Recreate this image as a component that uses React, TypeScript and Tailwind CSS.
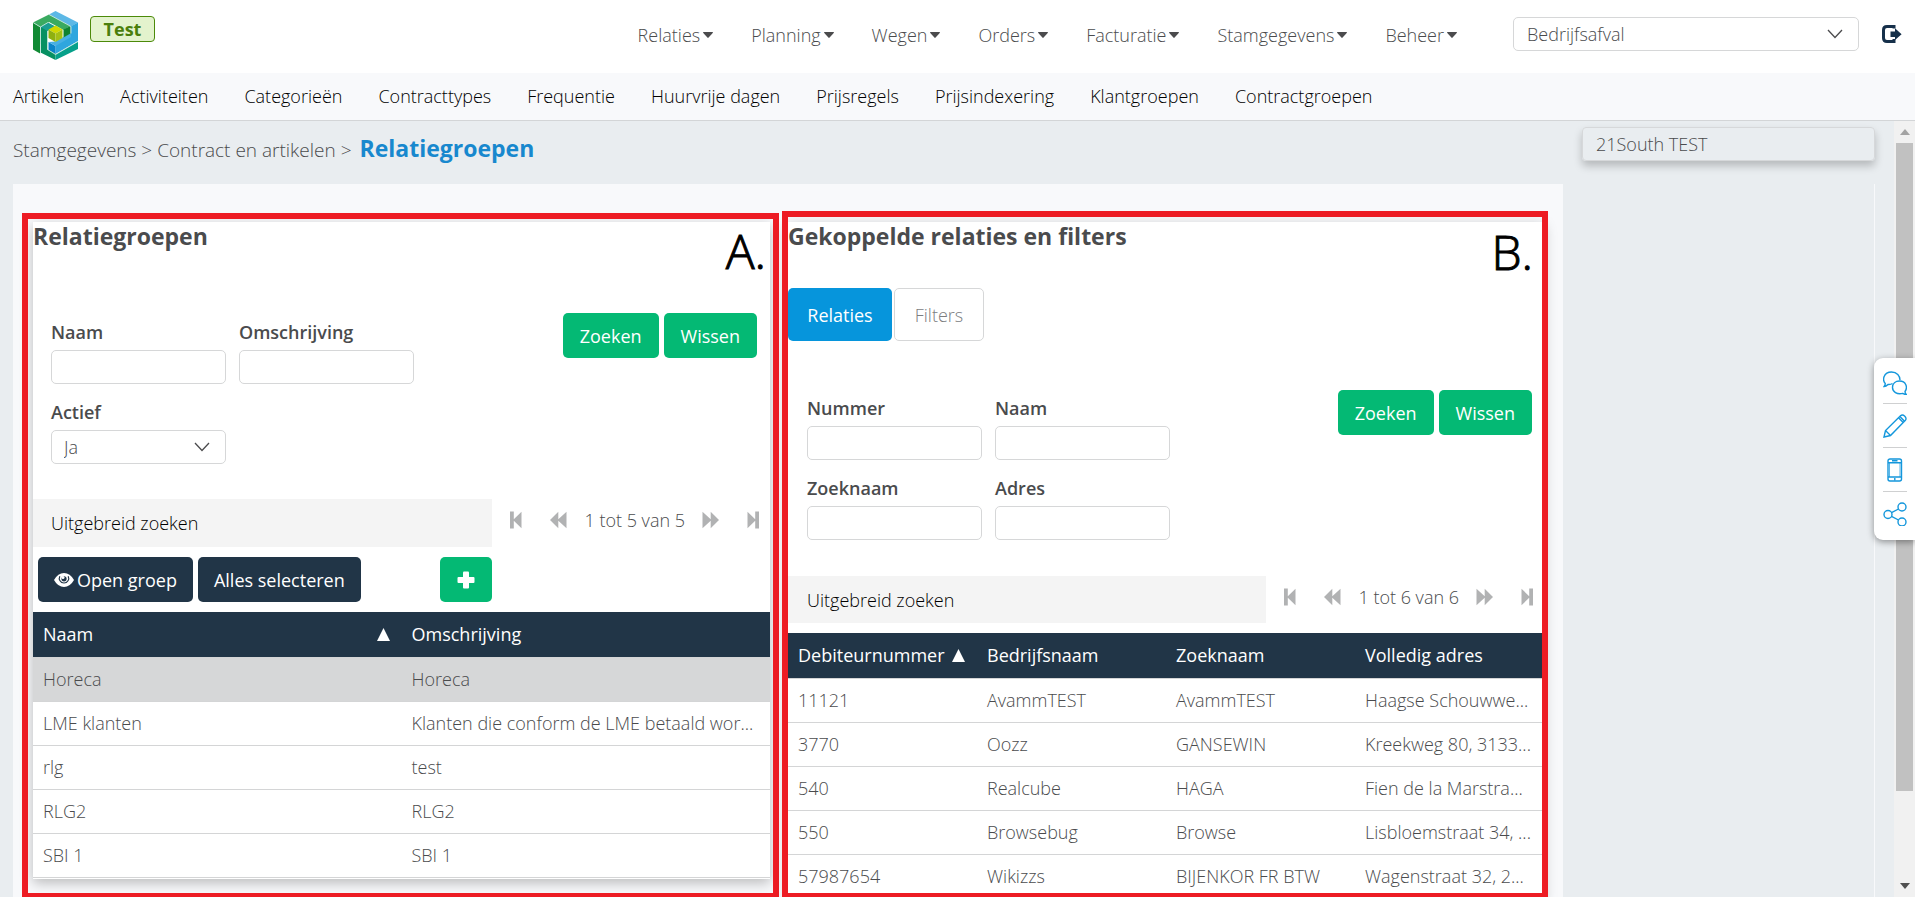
import React, { useId } from 'react';

const mainMenu = ['Relaties', 'Planning', 'Wegen', 'Orders', 'Facturatie', 'Stamgegevens', 'Beheer'];

const subMenu = [
  'Artikelen',
  'Activiteiten',
  'Categorieën',
  'Contracttypes',
  'Frequentie',
  'Huurvrije dagen',
  'Prijsregels',
  'Prijsindexering',
  'Klantgroepen',
  'Contractgroepen',
];

const groups = [
  ['Horeca', 'Horeca'],
  ['LME klanten', 'Klanten die conform de LME betaald wor...'],
  ['rlg', 'test'],
  ['RLG2', 'RLG2'],
  ['SBI 1', 'SBI 1'],
];

const relations = [
  ['11121', 'AvammTEST', 'AvammTEST', 'Haagse Schouwwe...'],
  ['3770', 'Oozz', 'GANSEWIN', 'Kreekweg 80, 3133...'],
  ['540', 'Realcube', 'HAGA', 'Fien de la Marstra...'],
  ['550', 'Browsebug', 'Browse', 'Lisbloemstraat 34, ...'],
  ['57987654', 'Wikizzs', 'BIJENKOR FR BTW', 'Wagenstraat 32, 2...'],
];

function Logo() {
  return (
    <svg viewBox="0 0 45 49" className="h-[49px] w-[45px]" aria-hidden="true">
      <path d="M22.5 0 45 11.5 38 15.5 16 3.5Z" fill="#5cb8e6" />
      <path d="M45 11.5V30L22.5 43V31L37.5 22.5V15.5Z" fill="#2fa6de" />
      <path d="M15.5 31 22.5 35V43L15.5 39Z" fill="#0a84c8" />
      <path d="M22.5 30.5 37.5 22 38 26 22.5 35 15.5 31Z" fill="#48b0e4" />
      <path d="M0 11.5 16 3.5 37.5 15 30.5 19 16 11 7 16Z" fill="#3aaa60" />
      <path d="M0 11.5 7 16V42.5L0 38.5Z" fill="#118a34" />
      <path d="M30.5 18.5 37.5 15V22.5L30.5 26.5Z" fill="#0f8230" />
      <path d="M7.500 15.500 15 11.500 22.500 15.500 14.500 20V37L7.500 33Z" fill="#1a9e92" />
      <path d="M7.500 16 14.500 20V38.500L22.500 43V49L7.500 41.500Z" fill="#079062" />
      <path d="M22.500 43.500 45 30.500V38L22.500 49Z" fill="#06a08a" />
      <path d="M0 11.500 7.500 16V42.500M16 3.500 38 15.500V22.500M22.500 43.500 45 30.500M7.500 16 15 11.500M14.500 20V38.500L22.500 43.500" fill="none" stroke="#d4eee6" strokeWidth="0.8" />
      <path d="M15.500 18.500 22.500 14.500 29.500 18.500 22.500 22.500Z" fill="#d0d800" />
      <path d="M15.500 18.500 22.500 22.500V31L15.500 27Z" fill="#8fb010" />
      <path d="M29.500 18.500 22.500 22.500V31L29.500 27Z" fill="#a5c015" />
    </svg>
  );
}

function Chevron() {
  return (
    <svg
      viewBox="0 0 16 10"
      className="pointer-events-none absolute right-4 top-3 h-[10px] w-4"
      fill="none"
      stroke="#4b4b4d"
      strokeWidth="1.3"
      aria-hidden="true"
    >
      <path d="M1 1 8 8.500 15 1" />
    </svg>
  );
}

function TextField({ label }: { label: string }) {
  const id = useId();
  return (
    <div className="flex w-[175px] flex-col">
      <label htmlFor={id} className="text-lg leading-6 font-semibold">
        {label}
      </label>
      <input id={id} type="text" className="mt-[6px] h-[34px] rounded-[5px] border border-[#d6d7d8] bg-white px-3" />
    </div>
  );
}

function SelectField({ label, value }: { label: string; value: string }) {
  const id = useId();
  return (
    <div className="flex w-[175px] flex-col">
      <label htmlFor={id} className="text-lg leading-6 font-semibold">
        {label}
      </label>
      <div className="relative mt-[6px] h-[34px]">
        <select id={id} className="h-full w-full appearance-none rounded-[5px] border border-[#d6d7d8] bg-white px-3">
          <option>{value}</option>
        </select>
        <Chevron />
      </div>
    </div>
  );
}

function SearchButtons() {
  return (
    <div className="flex gap-[5px]">
      {['Zoeken', 'Wissen'].map((label) => (
        <button key={label} type="button" className="h-[45px] rounded-[5px] bg-[#04b974] px-[17px] font-normal text-white">
          {label}
        </button>
      ))}
    </div>
  );
}

function PagerIcon({ kind, label }: { kind: 'first' | 'prev' | 'next' | 'last'; label: string }) {
  const single = kind === 'first' || kind === 'last';
  const flip = kind === 'next' || kind === 'last';
  return (
    <button type="button" aria-label={label} className={single ? 'w-3' : 'w-[17px]'}>
      <svg
        viewBox={single ? '0 0 12 18' : '0 0 17 18'}
        className={flip ? 'h-[18px] w-full -scale-x-100' : 'h-[18px] w-full'}
        fill="#b1b2b3"
        aria-hidden="true"
      >
        {single ? <path d="M0 .5H3.800V8.200L11.500 .8V17.200L3.800 9.800V17.500H0Z" /> : <path d="M0 9 8.300 .8V8.200L16.500 .8V17.200L8.300 9.800V17.200Z" />}
      </svg>
    </button>
  );
}

function Pager({ text }: { text: string }) {
  return (
    <div className="flex h-[42px] items-center pr-[11px]">
      <PagerIcon kind="first" label="Eerste" />
      <span className="w-7" />
      <PagerIcon kind="prev" label="Vorige" />
      <span className="px-[17px]">{text}</span>
      <PagerIcon kind="next" label="Volgende" />
      <span className="w-7" />
      <PagerIcon kind="last" label="Laatste" />
    </div>
  );
}

function DataTable({ columns, rows, selected }: { columns: string[]; rows: string[][]; selected?: number }) {
  return (
    <table className="w-full table-fixed border-collapse border-b border-[#d4d5d6] text-left">
      <thead>
        <tr className="h-[45px] bg-[#213547] text-white">
          {columns.map((column, i) => (
            <th key={column} className="py-0 pr-3 pl-[10px] font-normal">
              <span className="flex items-center justify-between">
                {column}
                {i === 0 && (
                  <svg viewBox="0 0 13 13" className="h-[13px] w-[13px]" fill="#ffffff" aria-hidden="true">
                    <path d="M6.500 0 13 13H0Z" />
                  </svg>
                )}
              </span>
            </th>
          ))}
        </tr>
      </thead>
      <tbody>
        {rows.map((row, i) => (
          <tr key={row[0]} className={i === selected ? 'h-11 border-t border-[#d4d5d6] bg-[#d6d7d8]' : 'h-11 border-t border-[#d4d5d6]'}>
            {row.map((cell, j) => (
              <td key={j} className="overflow-hidden px-[10px] py-0 whitespace-nowrap">
                {cell}
              </td>
            ))}
          </tr>
        ))}
      </tbody>
    </table>
  );
}

const dockIcons = [
  {
    label: 'Chat',
    art: (
      <>
        <path d="M9.500 12.500C8 13.500 6 13.600 5 13.500 4 14.500 2.500 15.500 1 15.600 2 14.500 2.300 13.500 2.300 12.600 -1 9 .5 1 8.500 1 14 1 17 5 17 9" />
        <path d="M22 20.500C22 21.500 22.500 22.800 23.500 23.500 22 23.500 20.500 23 19.600 22.400 14 24 9.500 20.500 9.500 16.500 9.500 12.500 12.500 10 16.500 10 23 10 25 16.500 22 20.500Z" />
      </>
    ),
  },
  {
    label: 'Bewerken',
    art: (
      <>
        <path d="M1 23 2.500 16.500 17.500 1.800C18.800.6 20.500 1 21.800 2.200 23.200 3.600 23.400 5.300 22.200 6.500L7.500 21.500Z" />
        <path d="M2.500 16.500 7.500 21.500M15.500 3.800 20.200 8.500M17 2.500 21.500 7.200" />
      </>
    ),
  },
  {
    label: 'Mobiel',
    art: (
      <>
        <rect x="5" y="1" width="13.500" height="22" rx="2" />
        <path d="M5 4.800H18.500M5 19H18.500M9 2.800H14.500M11.800 20V22.500" />
        <path d="M6.500 5V19M17 5V19" strokeWidth="0.7" />
      </>
    ),
  },
  {
    label: 'Delen',
    art: (
      <>
        <circle cx="5" cy="12.500" r="4" />
        <circle cx="19" cy="5" r="4" />
        <circle cx="19" cy="20" r="4" />
        <path d="M8.500 10.600 15.500 7M8.500 14.300 15.500 18" />
      </>
    ),
  },
];

export default function App() {
  return (
    <div className="flex h-screen flex-col overflow-hidden bg-[#e9edf0] font-['Open_Sans','Noto_Sans',sans-serif] text-lg leading-6 font-light text-[#4a4b4d]">
      <header className="flex h-[73px] shrink-0 bg-white pr-[13px] pl-[33px]">
        <a href="#" aria-label="Start" className="mt-[11px]">
          <Logo />
        </a>
        <span className="mt-4 ml-3 flex h-[26px] w-[65px] items-center justify-center rounded-[4px] border border-[#4c8a0a] bg-[#e3f3cd] font-bold text-[#4a7f0c]">
          Test
        </span>
        <nav className="mt-[23px] mr-[56px] ml-auto flex gap-[38px]">
          {mainMenu.map((item) => (
            <a key={item} href="#" className="flex h-6 items-center gap-[3px]">
              {item}
              <svg viewBox="0 0 10 6" className="h-[6px] w-[10px]" fill="#4b4b4d" aria-hidden="true">
                <path d="M.6 0H9.400Q10.400.2 9.700 1L5.600 5.600Q5 6.200 4.400 5.600L.3 1Q-.4.200.6 0Z" />
              </svg>
            </a>
          ))}
        </nav>
        <div className="relative mt-[17px] h-[34px] w-[346px]">
          <select aria-label="Afdeling" className="h-full w-full appearance-none rounded-[5px] border border-[#d6d7d8] bg-white px-[13px]">
            <option>Bedrijfsafval</option>
          </select>
          <Chevron />
        </div>
        <button type="button" aria-label="Uitloggen" className="mt-[25px] ml-[23px] h-[18px] w-5">
          <svg viewBox="0 0 20 18" className="h-[18px] w-5" fill="none" aria-hidden="true">
            <path d="M12 3.500V1.500H5Q1.500 1.500 1.500 5V13Q1.500 16.500 5 16.500H12V14" stroke="#16304a" strokeWidth="3" />
            <path d="M8.500 6.500H13V3.300L19.600 9.200 13 15V12H8.500Z" fill="#16304a" />
          </svg>
        </button>
      </header>

      <nav className="flex h-12 shrink-0 items-center gap-9 border-b border-[#d3d5d7] bg-[#f8f9fb] pb-[2px] pl-[13px] text-black">
        {subMenu.map((item) => (
          <a key={item} href="#">
            {item}
          </a>
        ))}
      </nav>

      <div className="flex min-h-0 flex-1">
        <main className="flex min-w-0 flex-1 flex-col overflow-hidden pr-[19px] pl-[13px]">
          <div className="flex h-[63px] shrink-0 items-start justify-between">
            <div className="mt-[13px] flex items-baseline gap-2 text-[19px] leading-7">
              <span>Stamgegevens &gt; Contract en artikelen &gt;</span>
              <h1 className="text-[23px] leading-7 font-bold text-[#1888ce]">Relatiegroepen</h1>
            </div>
            <div className="mt-[6px] flex h-[34px] w-[293px] items-center rounded-[4px] border border-[#d6d8da] px-[13px] shadow-[0_5px_9px_rgba(0,0,0,0.22)]">
              21South TEST
            </div>
          </div>

          <div className="flex flex-1 items-stretch border-r border-[#f8f9fb]">
            <div className="mr-[311px] grid flex-1 grid-cols-[737fr_756fr] items-start gap-[18px] bg-[#f8f9fb] pt-[38px] pr-[19px] pl-5">
              <div className="relative">
                <section className="bg-white pb-px shadow-[0_4px_12px_rgba(0,0,0,0.25)]">
                  <h2 className="pb-px text-[23px] leading-7 font-bold">Relatiegroepen</h2>
                  <div className="flex h-[248px] justify-between pt-[62px] pr-[13px] pl-[18px]">
                    <div className="mt-[7px] flex w-[370px] flex-wrap content-start gap-x-[13px] gap-y-4">
                      <TextField label="Naam" />
                      <TextField label="Omschrijving" />
                      <SelectField label="Actief" value="Ja" />
                    </div>
                    <SearchButtons />
                  </div>
                  <div className="flex justify-between">
                    <button type="button" className="mr-[18px] h-12 flex-1 bg-[#f4f4f4] px-[18px] text-left text-black">
                      Uitgebreid zoeken
                    </button>
                    <Pager text="1 tot 5 van 5" />
                  </div>
                  <div className="flex h-[65px] items-center gap-[5px] pl-[5px]">
                    <button type="button" className="flex h-[45px] items-center gap-[3px] rounded-[5px] bg-[#213547] px-4 font-normal text-white">
                      <svg viewBox="0 0 20 14" className="h-[14px] w-5" aria-hidden="true">
                        <path d="M0 7Q4 0 10 0T20 7Q16 14 10 14T0 7Z" fill="#ffffff" />
                        <path d="M5.800 3.200A4.700 4.700 0 1 0 14.200 3.200" fill="none" stroke="#213547" strokeWidth="1.200" />
                        <circle cx="10" cy="5.800" r="2.600" fill="#213547" />
                        <circle cx="9" cy="4.400" r="1.500" fill="#ffffff" />
                      </svg>
                      Open groep
                    </button>
                    <button type="button" className="h-[45px] rounded-[5px] bg-[#213547] px-4 font-normal text-white">
                      Alles selecteren
                    </button>
                    <button
                      type="button"
                      aria-label="Toevoegen"
                      className="ml-[74px] flex h-[45px] w-[52px] items-center justify-center rounded-[5px] bg-[#04b974]"
                    >
                      <svg viewBox="0 0 18 18" className="h-[18px] w-[18px]" fill="#ffffff" aria-hidden="true">
                        <rect x="6" y="0.500" width="6" height="17" rx="1" />
                        <rect x="0.500" y="6" width="17" height="6" rx="1" />
                      </svg>
                    </button>
                  </div>
                  <DataTable columns={['Naam', 'Omschrijving']} rows={groups} selected={0} />
                </section>
                <div className="pointer-events-none absolute -top-[9px] -right-[9px] -bottom-5 -left-[11px] border-6 border-[#ed1c24]" />
                <span className="absolute top-px right-1 text-5xl leading-[56px] font-light text-black [-webkit-text-stroke:1px_black]">A.</span>
              </div>

              <div className="relative">
                <section className="bg-white shadow-[0_4px_12px_rgba(0,0,0,0.25)]">
                  <h2 className="pb-px text-[23px] leading-7 font-bold">Gekoppelde relaties en filters</h2>
                  <div className="flex gap-[2px] pt-[37px]">
                    <button type="button" className="h-[53px] w-[104px] rounded-[5px] bg-[#0695dc] font-normal text-white">
                      Relaties
                    </button>
                    <button type="button" className="h-[53px] w-[90px] rounded-[5px] border border-[#d6d7d8] bg-white text-[#7c7d7f]">
                      Filters
                    </button>
                  </div>
                  <div className="flex h-[235px] justify-between pt-[49px] pr-[12px] pl-[19px]">
                    <div className="mt-[6px] flex w-[370px] flex-wrap content-start gap-x-[13px] gap-y-4">
                      <TextField label="Nummer" />
                      <TextField label="Naam" />
                      <TextField label="Zoeknaam" />
                      <TextField label="Adres" />
                    </div>
                    <SearchButtons />
                  </div>
                  <div className="flex justify-between pb-[10px]">
                    <button type="button" className="mr-[18px] h-[47px] flex-1 bg-[#f4f4f4] px-[19px] text-left text-black">
                      Uitgebreid zoeken
                    </button>
                    <Pager text="1 tot 6 van 6" />
                  </div>
                  <DataTable columns={['Debiteurnummer', 'Bedrijfsnaam', 'Zoeknaam', 'Volledig adres']} rows={relations} />
                </section>
                <div className="pointer-events-none absolute -top-[11px] -right-1 bottom-0 -left-[6px] border-6 border-[#ed1c24]" />
                <span className="absolute top-[2px] right-[11px] text-5xl leading-[56px] font-light text-black [-webkit-text-stroke:1px_black]">B.</span>
              </div>
            </div>
          </div>
        </main>

        <div className="flex w-[21px] shrink-0 flex-col items-center bg-[#f1f1f1]" aria-hidden="true">
          <svg viewBox="0 0 10 6" className="my-2 h-[6px] w-[10px] shrink-0" fill="#a3a3a3">
            <path d="M5 0 10 6H0Z" />
          </svg>
          <div className="w-[17px] flex-[649] bg-[#c1c1c1]" />
          <div className="flex-[84]" />
          <svg viewBox="0 0 10 6" className="my-2 h-[6px] w-[10px] shrink-0" fill="#505050">
            <path d="M0 0H10L5 6Z" />
          </svg>
        </div>
      </div>

      <aside className="fixed top-[358px] right-0 flex w-[41px] flex-col rounded-l-[9px] bg-white py-[5px] pr-[8px] pl-[9px] shadow-[0_2px_7px_rgba(0,0,0,0.4)]">
        {dockIcons.map((icon, i) => (
          <button
            key={icon.label}
            type="button"
            aria-label={icon.label}
            className={i === 0 ? 'flex h-10 items-center' : 'flex h-11 items-center border-t border-[#cfd0d1]'}
          >
            <svg viewBox="0 0 24 24" className="h-6 w-6" fill="none" stroke="#1497dc" strokeWidth="1.4" aria-hidden="true">
              {icon.art}
            </svg>
          </button>
        ))}
      </aside>
    </div>
  );
}
